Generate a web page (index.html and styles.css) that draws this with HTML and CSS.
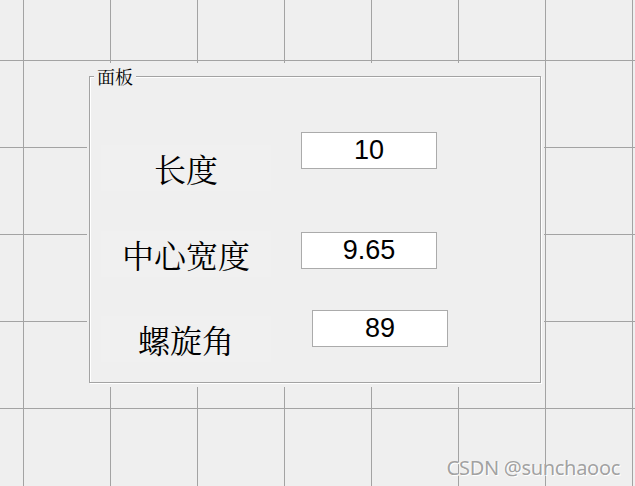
FILE: index.html
```html
<!DOCTYPE html>
<html lang="zh">
<head>
<meta charset="utf-8">
<title>面板</title>
<link rel="stylesheet" href="styles.css">
</head>
<body>
<div class="canvas">
  <div class="panel-area">
    <div class="panel">
      <span class="panel-title">面板</span>
      <div class="row row-1">
        <div class="label label-1">长度</div>
        <div class="edit">10</div>
      </div>
      <div class="row row-2">
        <div class="label label-2">中心宽度</div>
        <div class="edit">9.65</div>
      </div>
      <div class="row row-3">
        <div class="label label-3">螺旋角</div>
        <div class="edit">89</div>
      </div>
    </div>
  </div>
  <div class="watermark">CSDN @sunchaooc</div>
</div>
</body>
</html>
```

FILE: styles.css
```css
html, body {
  margin: 0;
  padding: 0;
}

body {
  width: 635px;
  height: 486px;
  overflow: hidden;
  background-color: #efefef;
}

.canvas {
  position: relative;
  width: 635px;
  height: 486px;
  background-color: #efefef;
  background-image:
    linear-gradient(to right, #a3a3a3 1px, transparent 1px),
    linear-gradient(to bottom, #a3a3a3 1px, transparent 1px);
  background-size: 87px 87px;
  background-position: 23px 60px;
  padding-top: 63px;
  padding-left: 87px;
  box-sizing: border-box;
}

.panel-area {
  width: 457px;
  height: 324px;
  background: #efefef;
  padding: 13px 0 0 2px;
  box-sizing: border-box;
}

.panel {
  position: relative;
  width: 452px;
  height: 307px;
  border: 1px solid #a3a3a3;
  box-shadow: inset 1px 1px 0 #ffffff, 1px 1px 0 #ffffff;
  box-sizing: border-box;
  padding: 55px 0 0 11px;
}

.panel-title {
  position: absolute;
  left: 4px;
  top: -10px;
  padding: 0 3px 0 3px;
  background: #efefef;
  font-family: "Noto Serif CJK SC", "Noto Sans CJK SC", sans-serif;
  font-size: 18px;
  line-height: 19px;
  color: #000;
}

.row {
  display: flex;
  align-items: flex-start;
}

.row-2 {
  margin-top: 41px;
}

.row-3 {
  margin-top: 33px;
}

.label {
  width: 170px;
  height: 46px;
  background: #f0f0f0;
  font-family: "Noto Serif CJK SC", "Noto Sans CJK SC", sans-serif;
  font-size: 32px;
  line-height: 46px;
  text-align: center;
  color: #000;
  flex: none;
}

.label-1 {
  margin-top: 13px;
  margin-right: 30px;
}

.label-2 {
  margin-top: -1px;
  margin-right: 30px;
}

.label-3 {
  margin-top: 6px;
  margin-right: 41px;
}

.edit {
  width: 136px;
  height: 37px;
  box-sizing: border-box;
  border: 1px solid #ababab;
  background: #ffffff;
  font-family: "Liberation Sans", Arial, sans-serif;
  font-size: 27px;
  line-height: 35px;
  text-align: center;
  color: #000;
  flex: none;
}

.watermark {
  position: absolute;
  right: 15px;
  bottom: 6px;
  font-family: "Noto Sans", sans-serif;
  font-size: 20px;
  letter-spacing: -0.3px;
  line-height: 24px;
  color: #a2a2a2;
  text-shadow: 1px 1px 0 #ffffff, -1px 0 0 rgba(255,255,255,0.6);
}
```
